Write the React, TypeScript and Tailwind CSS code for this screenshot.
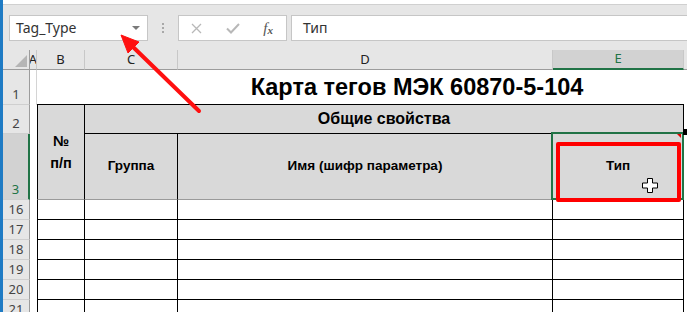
import React from "react";

const UI = { fontFamily: '"Noto Sans", "Open Sans", sans-serif' };
const CELL = { fontFamily: '"Liberation Sans", Arial, sans-serif' };

function RowHead({ n, h }: { n: string; h: string }) {
  return (
    <div
      className={`${h} bg-[#e6e6e6] border-r border-r-[#9c9c9c] border-b border-b-[#cfcfcf] flex items-end justify-center pb-[1px] text-[13px] leading-none text-[#444]`}
      style={UI}
    >
      <span className="pb-[2px]">{n}</span>
    </div>
  );
}

function DataRow({ n }: { n: string }) {
  return (
    <>
      <RowHead n={n} h="h-[20px]" />
      <div className="bg-white" />
      <div className="bg-white border-l border-r border-b border-black" />
      <div className="bg-white border-r border-b border-black" />
      <div className="bg-white border-r border-b border-black" />
      <div className="bg-white border-r border-b border-black" />
      <div className="bg-white" />
    </>
  );
}

export default function App() {
  return (
    <div className="w-[687px] h-[312px] overflow-hidden flex bg-[#e6e6e6] relative">
      <div className="w-[3px] shrink-0 bg-[#1f7bc4]" />
      <div className="flex-1 min-w-0 flex flex-col">
        {/* top strip */}
        <div className="h-[5px] bg-white border-b border-[#d0d0d0] shrink-0" />
        {/* toolbar */}
        <div className="h-[45px] shrink-0 flex items-start pt-[10px] pl-[6px] overflow-hidden" style={UI}>
          <div className="w-[139px] h-[26px] shrink-0 bg-white border border-[#c6c6c6] flex items-center pl-[6px] pr-[7px]">
            <span className="flex-1 text-[14px] text-[#333] leading-none">Tag_Type</span>
            <span className="w-0 h-0 border-l-[4px] border-r-[4px] border-t-[4px] border-l-transparent border-r-transparent border-t-[#7a7a7a]" />
          </div>
          <div className="w-[30px] h-[26px] shrink-0 flex flex-col items-center justify-center gap-[2px]">
            <span className="w-[2px] h-[2px] bg-[#a8a8a8]" />
            <span className="w-[2px] h-[2px] bg-[#a8a8a8]" />
            <span className="w-[2px] h-[2px] bg-[#a8a8a8]" />
          </div>
          <div className="w-[109px] h-[26px] shrink-0 bg-white border border-[#c6c6c6] flex items-center">
            <div className="w-[36px] flex justify-center">
              <svg width="11" height="11" viewBox="0 0 11 11">
                <path d="M1 1 L10 10 M10 1 L1 10" stroke="#b8b8b8" strokeWidth="1.3" />
              </svg>
            </div>
            <div className="w-[36px] flex justify-center">
              <svg width="14" height="11" viewBox="0 0 14 11">
                <path d="M1 5.5 L5 9.5 L13 1" stroke="#b8b8b8" strokeWidth="2" fill="none" />
              </svg>
            </div>
            <div className="w-[36px] flex justify-center items-end text-[#555] italic leading-none" style={{ fontFamily: '"Liberation Serif", serif' }}>
              <span className="text-[15px]">f</span>
              <span className="text-[11px] font-bold">x</span>
            </div>
          </div>
          <div className="w-[420px] h-[26px] shrink-0 ml-[4px] bg-white border border-[#c6c6c6] flex items-center pl-[11px]">
            <span className="text-[14px] text-[#333] leading-none">Тип</span>
          </div>
        </div>

        {/* grid */}
        <div className="grid grid-cols-[27px_7px_48px_93px_375px_131px_1fr] grid-rows-[20px_35px_29px_66px_20px_20px_20px_20px_20px_20px] bg-white">
          {/* column headers */}
          <div className="bg-[#e6e6e6] border-r border-[#9c9c9c] border-b relative">
            <svg className="absolute right-[2px] bottom-[2px]" width="12" height="12" viewBox="0 0 12 12">
              <path d="M12 0 L12 12 L0 12 Z" fill="#b5b5b5" />
            </svg>
          </div>
          <div className="bg-[#e6e6e6] border-r border-r-[#c8c8c8] border-b border-b-[#9c9c9c] flex items-center justify-center overflow-hidden text-[13px] text-[#222]" style={UI}>A</div>
          <div className="bg-[#e6e6e6] border-r border-r-[#c8c8c8] border-b border-b-[#9c9c9c] flex items-center justify-center text-[13px] text-[#222]" style={UI}>B</div>
          <div className="bg-[#e6e6e6] border-r border-r-[#c8c8c8] border-b border-b-[#9c9c9c] flex items-center justify-center text-[13px] text-[#222]" style={UI}>C</div>
          <div className="bg-[#e6e6e6] border-r border-r-[#c8c8c8] border-b border-b-[#9c9c9c] flex items-center justify-center text-[13px] text-[#222]" style={UI}>D</div>
          <div className="bg-[#d2d2d2] border-r border-r-[#c8c8c8] border-b-2 border-b-[#217346] flex items-center justify-center text-[13px] text-[#217346]" style={UI}>E</div>
          <div className="bg-[#e6e6e6] border-b border-b-[#9c9c9c]" />

          {/* row 1 */}
          <RowHead n="1" h="h-[35px]" />
          <div className="bg-white border-r border-[#d4d4d4]" />
          <div className="col-span-4 bg-white border-b border-black flex items-end justify-center pl-[113px] pb-[5px]">
            <span className="text-[23.5px] font-bold leading-none text-black" style={CELL}>
              Карта тегов МЭК 60870-5-104
            </span>
          </div>
          <div className="bg-white" />

          {/* row 2 */}
          <RowHead n="2" h="h-[29px]" />
          <div className="bg-white row-span-2" />
          <div className="row-span-2 bg-[#d9d9d9] border-l border-r border-black border-b border-b-[#9a9a9a] flex flex-col items-center justify-center gap-[7px] text-[14.5px] font-bold leading-none text-black" style={CELL}>
            <span>№</span>
            <span>п/п</span>
          </div>
          <div className="col-span-3 bg-[#d9d9d9] border-r border-b border-black flex items-center justify-center text-[16px] font-bold leading-none text-black" style={CELL}>
            Общие свойства
          </div>
          <div className="bg-white" />

          {/* row 3 */}
          <div className="h-[66px] bg-[#d2d2d2] border-r-2 border-r-[#217346] border-b border-b-[#cfcfcf] flex items-end justify-center text-[13px] leading-none text-[#217346]" style={UI}>
            <span className="pb-[3px]">3</span>
          </div>
          <div className="bg-[#d9d9d9] border-r border-r-black border-b border-b-[#9a9a9a] flex items-center justify-center text-[13.5px] font-bold text-black" style={CELL}>
            Группа
          </div>
          <div className="bg-[#d9d9d9] border-r border-r-black border-b border-b-[#9a9a9a] flex items-center justify-center text-[13.5px] font-bold text-black" style={CELL}>
            Имя (шифр параметра)
          </div>
          <div className="relative bg-[#d9d9d9] border-r border-r-black border-b border-b-[#9a9a9a] flex items-center justify-center text-[13.5px] font-bold text-black" style={CELL}>
            Тип
            <div className="absolute left-[-2px] top-[-2px] right-[-1px] bottom-[-1px] border-2 border-[#217346] z-10" />
            <div className="absolute left-[3px] top-[8px] right-[2px] bottom-[-3px] border-[4px] border-[#ff0000] rounded-[2px] z-20" />
            <svg className="absolute right-[2px] top-[0px] z-30" width="4" height="4" viewBox="0 0 4 4">
              <path d="M0 0 L4 0 L4 4 Z" fill="#e00000" />
            </svg>
            <div className="absolute left-[130px] top-[-5px] w-[5px] h-[6px] bg-black z-30" />
            <svg className="absolute left-[89px] top-[44px] z-30" width="16" height="15" viewBox="0 0 16 15">
              <path d="M5.5 0.5 H10.5 V5 H15.5 V10 H10.5 V14.5 H5.5 V10 H0.5 V5 H5.5 Z" fill="white" stroke="black" strokeWidth="1" />
            </svg>
          </div>
          <div className="bg-white" />

          <DataRow n="16" />
          <DataRow n="17" />
          <DataRow n="18" />
          <DataRow n="19" />
          <DataRow n="20" />
          <DataRow n="21" />
        </div>
      </div>

      {/* red arrow annotation */}
      <svg className="absolute left-0 top-0 pointer-events-none z-40" width="687" height="312" viewBox="0 0 687 312">
        <line x1="199" y1="111" x2="131" y2="45" stroke="#ff1010" strokeWidth="4" strokeLinecap="round" />
        <path d="M121 35 L139 42 L128 53 Z" fill="#ff1010" stroke="#ff1010" strokeWidth="1" strokeLinejoin="round" />
      </svg>
    </div>
  );
}
